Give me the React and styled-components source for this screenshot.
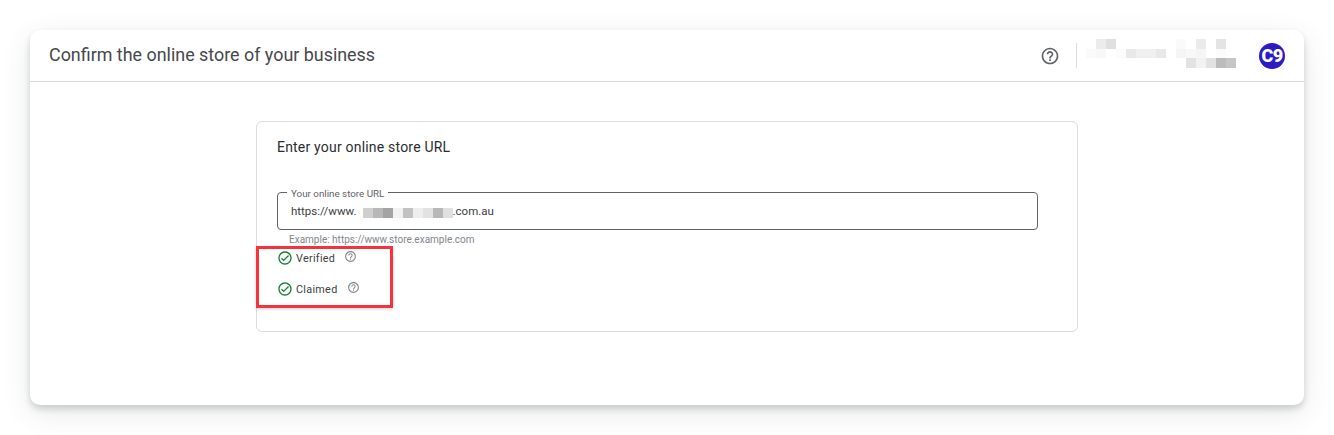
import React from "react";
import styled, { createGlobalStyle } from "styled-components";
import { MdHelpOutline, MdOutlineCheckCircle } from "react-icons/md";

const GlobalStyle = createGlobalStyle`
    html, body {
        margin: 0;
        background: #ffffff;
        font-family: Roboto, "Liberation Sans", sans-serif;
    }
`;

const Page = styled.div`
    width: 1334px;
    height: 435px;
    padding: 30px;
    box-sizing: border-box;
    overflow: hidden;
`;

const Panel = styled.div`
    height: 375px;
    background: #ffffff;
    border-radius: 10px;
    box-shadow: 0 4px 6px rgba(60, 64, 67, 0.2), 0 8px 28px rgba(60, 64, 67, 0.12);
`;

const Header = styled.header`
    height: 51px;
    display: flex;
    align-items: center;
    padding: 0 19px 0 19px;
    border-bottom: 1px solid #d9dadc;
`;

const Title = styled.h1`
    flex: 1;
    margin: 0 0 2px;
    font-size: 17.9px;
    font-weight: 400;
    color: #45484b;
`;

const HeaderHelp = styled(MdHelpOutline)`
    font-size: 20px;
    color: #5f6368;
`;

const Divider = styled.div`
    width: 1px;
    height: 25px;
    margin: 0 9px 0 16px;
    background: #dadce0;
`;

const Mosaic = styled.div`
    display: grid;
    grid-template-columns: repeat(${(p) => p.$cols}, 10px);
    grid-auto-rows: ${(p) => p.$rowHeight}px;
`;

const Block = styled.i`
    display: block;
    background: ${(p) => p.$color};
`;

const Account = styled(Mosaic)`
    margin: 0 13px 4px 0;
`;

const UrlMosaic = styled(Mosaic)`
    margin: 3px 0 0 -4px;
`;

const Avatar = styled.div`
    width: 26px;
    height: 26px;
    border-radius: 50%;
    background: #2a1bc4;
    color: #ffffff;
    font-size: 18px;
    font-weight: 900;
    letter-spacing: -0.6px;
    display: flex;
    align-items: center;
    justify-content: center;
    overflow: hidden;
`;

const Card = styled.section`
    position: relative;
    width: 822px;
    height: 211px;
    margin: 39px auto 0;
    padding: 16px 20px 0;
    box-sizing: border-box;
    border: 1px solid #dadce0;
    border-radius: 6px;
`;

const CardTitle = styled.h2`
    margin: 0 0 35px;
    font-size: 14px;
    line-height: 19px;
    letter-spacing: 0.2px;
    font-weight: 400;
    color: #2b2d30;
`;

const Field = styled.div`
    position: relative;
    width: 761px;
    height: 38px;
    box-sizing: border-box;
    border: 1px solid #5f6368;
    border-radius: 4px;
    display: flex;
    align-items: center;
    padding: 0 13px;
    font-size: 11.5px;
    color: #3c4043;
`;

const FieldLabel = styled.label`
    position: absolute;
    top: -5px;
    left: 9px;
    padding: 0 4px;
    background: #ffffff;
    font-size: 9.8px;
    line-height: 11px;
    color: #5f6368;
`;

const Hint = styled.div`
    margin: 4px 0 0 12px;
    font-size: 10px;
    line-height: 12px;
    color: #80868b;
`;

const StatusList = styled.div`
    margin-top: 3px;
    display: flex;
    flex-direction: column;
    gap: 13px;
`;

const Status = styled.div`
    display: flex;
    align-items: center;
    height: 18px;
    font-size: 10.8px;
    letter-spacing: 0.3px;
    color: #3c4043;
`;

const CheckIcon = styled(MdOutlineCheckCircle)`
    font-size: 16px;
    color: #188038;
    margin-right: 3px;
`;

const SmallHelp = styled(MdHelpOutline)`
    font-size: 13px;
    color: #80868b;
    margin: -3px 0 0 9px;
`;

const Annotation = styled.div`
    position: absolute;
    left: -1px;
    top: 124px;
    width: 137px;
    height: 62px;
    box-sizing: border-box;
    border: 3px solid #f4333f;
    box-shadow: 0 1px 3px rgba(0, 0, 0, 0.2);
`;

const accountRows = [
    ["", "#ececec", "#e0e0e0", "", "", "", "", "", "", "#fafafa", "", "#ebebeb", "", "#e4e4e4", "", ""],
    ["#fafafa", "#f8f8f8", "", "#fcfcfc", "#e8e8e8", "#f0f0f0", "#f0f0f0", "#e8e8e8", "", "#f5f5f5", "#f8f8f8", "#f5f5f5", "", "#fcfcfc", "", ""],
    ["", "", "", "", "", "", "", "", "", "", "#e2e2e2", "#f2f2f2", "#e2e2e2", "#bcbcbc", "#c6c6c6", ""],
];

const urlBlocks = ["transparent", "#cfcfcf", "#b8b8b8", "#a4a4a4", "#f2f2f2", "#c2c2c2", "#eeeeee", "#e2e2e2", "#b8b8b8", "#e0e0e0"];

function App() {
    return (
        <Page>
            <GlobalStyle />
            <Panel>
                <Header>
                    <Title>Confirm the online store of your business</Title>
                    <HeaderHelp />
                    <Divider />
                    <Account $cols={16} $rowHeight={9.5}>
                        {accountRows.flat().map((color, i) => (
                            <Block key={i} $color={color || "transparent"} />
                        ))}
                    </Account>
                    <Avatar>C9</Avatar>
                </Header>
                <Card>
                    <CardTitle>Enter your online store URL</CardTitle>
                    <Field>
                        <FieldLabel>Your online store URL</FieldLabel>
                        https://www.
                        <UrlMosaic $cols={10} $rowHeight={10}>
                            {urlBlocks.map((color, i) => (
                                <Block key={i} $color={color} />
                            ))}
                        </UrlMosaic>
                        .com.au
                    </Field>
                    <Hint>Example: https://www.store.example.com</Hint>
                    <StatusList>
                        <Status>
                            <CheckIcon />
                            Verified
                            <SmallHelp />
                        </Status>
                        <Status>
                            <CheckIcon />
                            Claimed
                            <SmallHelp />
                        </Status>
                    </StatusList>
                    <Annotation />
                </Card>
            </Panel>
        </Page>
    );
}

export default App;
